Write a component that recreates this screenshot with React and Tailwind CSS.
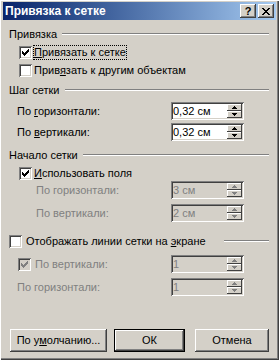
import React from 'react';

const sunken = 'shadow-[inset_1px_1px_0_#808080,inset_-1px_-1px_0_#ffffff,inset_2px_2px_0_#404040,inset_-2px_-2px_0_#d4d0c8]';
const raised = 'shadow-[inset_-1px_-1px_0_#404040,inset_1px_1px_0_#ffffff,inset_-2px_-2px_0_#808080,inset_2px_2px_0_#d4d0c8]';

// classic 7x7 tick, drawn pixel by pixel
const tick = [
  [6, 0], [5, 1], [6, 1], [0, 2], [4, 2], [5, 2], [6, 2],
  [0, 3], [1, 3], [3, 3], [4, 3], [5, 3],
  [0, 4], [1, 4], [2, 4], [3, 4], [4, 4],
  [1, 5], [2, 5], [3, 5], [2, 6],
];

function Check({ checked, disabled }) {
  return (
    <span className={`w-[13px] h-[13px] shrink-0 ${disabled ? 'bg-[#d4d0c8]' : 'bg-white'} ${sunken}`}>
      {checked && (
        <svg width="13" height="13" viewBox="0 0 13 13" shapeRendering="crispEdges">
          {tick.map(([x, y]) => (
            <rect key={`${x}-${y}`} x={x + 3} y={y + 3} width="1" height="1" fill={disabled ? '#808080' : '#000'} />
          ))}
        </svg>
      )}
    </span>
  );
}

function Arrow({ up, disabled }) {
  const c = disabled ? '#808080' : '#000';
  return (
    <div className={`h-[7px] bg-[#d4d0c8] flex items-center justify-center shadow-[inset_-1px_-1px_0_#404040,inset_1px_1px_0_#ffffff]`}>
      <svg width="7" height="4" viewBox="0 0 7 4" shapeRendering="crispEdges">
        {up ? (
          <path d="M3 0h1v1h1v1h1v1H1V2h1V1h1z" fill={c} />
        ) : (
          <path d="M1 0h5v1H5v1H4v1H3V2H2V1H1z" fill={c} />
        )}
      </svg>
    </div>
  );
}

function Spin({ value, disabled }) {
  return (
    <div className={`w-[73px] h-[18px] shrink-0 flex p-[2px] ${disabled ? 'bg-[#d4d0c8] text-[#808080]' : 'bg-white'} ${sunken}`}>
      <div className="flex-1 leading-[14px] pl-[0px]">{value}</div>
      <div className="w-[15px] flex flex-col">
        <Arrow up disabled={disabled} />
        <Arrow disabled={disabled} />
      </div>
    </div>
  );
}

function GroupHead({ label, className = '' }) {
  return (
    <div className={`flex items-center h-[14px] ${className}`}>
      <span className="leading-none">{label}</span>
      <div className="flex-1 ml-[5px] h-[2px] border-t border-b border-t-[#808080] border-b-white" />
    </div>
  );
}

function SpinRow({ label, value, indent, disabled, className = '' }) {
  return (
    <div className={`flex items-center h-[18px] ${className}`}>
      <div className={`w-[162px] ${indent} ${disabled ? 'text-[#808080]' : ''}`}>{label}</div>
      <Spin value={value} disabled={disabled} />
    </div>
  );
}

function Btn({ children, width, def, className = '' }) {
  return (
    <button
      className={`${width} h-[23px] bg-[#d4d0c8] flex items-center justify-center leading-none ${def ? 'border border-black' : ''} ${raised} ${className}`}
    >
      {children}
    </button>
  );
}

export default function App() {
  return (
    <div className="w-[279px] h-[360px] overflow-hidden bg-[#d4d0c8] pt-[2px] px-[3px] pb-[3px] shadow-[inset_1px_1px_0_#ffffff,inset_-1px_-1px_0_#404040,inset_-2px_-2px_0_#808080] font-['Liberation_Sans',Arial,sans-serif] text-[11px] text-black">
      {/* Title bar */}
      <div className="h-[18px] flex items-center pl-[2px] pr-[2px] bg-linear-to-r from-[#0a246a] to-[#a6caf0]">
        <span className="flex-1 text-white font-bold text-[12px] leading-none">Привязка к сетке</span>
        <div className={`w-[16px] h-[14px] bg-[#d4d0c8] flex items-center justify-center font-bold text-[11px] leading-none ${raised}`}>?</div>
        <div className={`w-[16px] h-[14px] ml-[2px] bg-[#d4d0c8] flex items-center justify-center ${raised}`}>
          <svg width="8" height="7" viewBox="0 0 8 7" shapeRendering="crispEdges">
            <path d="M0 0h2v1h1v1h2V1h1V0h2v1H7v1H6v1H5v1h1v1h1v1h1v1H6V6H5V5H3v1H2v1H0V6h1V5h1V4h1V3H2V2H1V1H0z" fill="#000" />
          </svg>
        </div>
      </div>

      <div className="pl-[6px] pr-[7px]">
        {/* Привязка */}
        <GroupHead label="Привязка" className="mt-[7px]" />
        <div className="flex items-center h-[18px] mt-[2px] pl-[10px]">
          <Check checked />
          <span className="ml-[1px] border border-dotted border-black leading-[13px]">
            <span className="underline">П</span>ривязать к сетке
          </span>
        </div>
        <div className="flex items-center h-[18px] pl-[10px]">
          <Check />
          <span className="ml-[2px] leading-[13px]">
            Прив<span className="underline">я</span>зать к другим объектам
          </span>
        </div>

        {/* Шаг сетки */}
        <GroupHead label="Шаг сетки" className="mt-[4px]" />
        <SpinRow
          className="mt-[5px]"
          indent="pl-[8px]"
          value="0,32 см"
          label={<>По <span className="underline">г</span>оризонтали:</>}
        />
        <SpinRow
          className="mt-[3px]"
          indent="pl-[8px]"
          value="0,32 см"
          label={<>По <span className="underline">в</span>ертикали:</>}
        />

        {/* Начало сетки */}
        <GroupHead label="Начало сетки" className="mt-[7px]" />
        <div className="flex items-center h-[13px] mt-[5px] pl-[10px]">
          <Check checked />
          <span className="ml-[2px] leading-[13px]">
            <span className="underline">И</span>спользовать поля
          </span>
        </div>
        <SpinRow className="mt-[1px]" indent="pl-[27px]" value="3 см" label="По горизонтали:" disabled />
        <SpinRow className="mt-[5px]" indent="pl-[27px]" value="2 см" label="По вертикали:" disabled />

        {/* Отображать линии */}
        <div className="flex items-center h-[14px] mt-[12px]">
          <Check />
          <span className="ml-[4px] leading-[13px]">
            Отображать линии сетки на <span className="underline">э</span>кране
          </span>
          <div className="ml-auto w-[45px] h-[2px] border-t border-b border-t-[#808080] border-b-white" />
        </div>
        <div className="flex items-center h-[18px] mt-[7px]">
          <div className="w-[162px] flex items-center pl-[9px]">
            <Check checked disabled />
            <span className="ml-[4px] text-[#808080]">По вертикали:</span>
          </div>
          <Spin value="1" disabled />
        </div>
        <SpinRow className="mt-[5px]" indent="pl-[8px]" value="1" label="По горизонтали:" disabled />

        {/* Buttons */}
        <div className="flex mt-[33px] pl-[1px]">
          <Btn width="w-[97px]">
            По у<span className="underline">м</span>олчанию...
          </Btn>
          <Btn width="w-[71px]" def className="ml-[7px]">ОК</Btn>
          <Btn width="w-[74px]" className="ml-[10px]">Отмена</Btn>
        </div>
      </div>
    </div>
  );
}
